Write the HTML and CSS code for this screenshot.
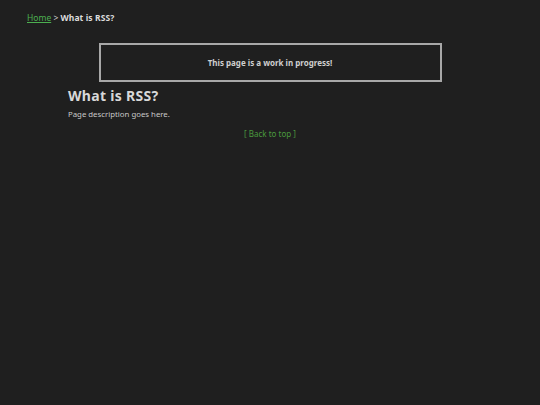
FILE: index.html
```html
<!DOCTYPE html>
<html>
<head>
<meta charset="utf-8">
<link rel="stylesheet" href="styles.css">
</head>
<body>
<nav class="crumbs"><a href="#" class="home">Home</a> &gt; <span class="current">What is RSS?</span></nav>
<main class="content">
  <div class="wip">This page is a work in progress!</div>
  <h1 class="title">What is RSS?</h1>
  <p class="desc">Page description goes here.</p>
  <p class="top"><a href="#">[ Back to top ]</a></p>
</main>
</body>
</html>
```
FILE: styles.css
```css
html, body {
  margin: 0;
  padding: 0;
  background: #1f1f1f;
  color: #d0d0d0;
  font-family: "Noto Sans", "Open Sans", sans-serif;
}
body {
  width: 540px;
  height: 405px;
}
.crumbs {
  padding: 11px 0 0 27px;
  font-size: 8.5px;
  line-height: 13px;
  color: #d0d0d0;
}
.crumbs .home {
  color: #4caf50;
  text-decoration: underline;
}
.crumbs .current {
  font-weight: bold;
  color: #dcdcdc;
  letter-spacing: 0.1px;
}
.content {
  width: 404px;
  margin: 19px auto 0;
}
.wip {
  width: 339px;
  margin: 0 auto;
  border: 2px solid #a8a8a8;
  height: 35px;
  display: flex;
  align-items: center;
  justify-content: center;
  font-size: 8px;
  font-weight: bold;
  color: #cfcfcf;
}
.title {
  margin: 4px 0 0;
  font-size: 14px;
  line-height: 20px;
  font-weight: bold;
  color: #d8d8d8;
  letter-spacing: 0.3px;
}
.desc {
  margin: 3px 0 0;
  font-size: 7.8px;
  line-height: 10px;
  color: #c8c8c8;
}
.top {
  margin: 10px 0 0;
  text-align: center;
  font-size: 8px;
  line-height: 10px;
}
.top a {
  color: #4a9a3e;
  text-decoration: none;
}
```
